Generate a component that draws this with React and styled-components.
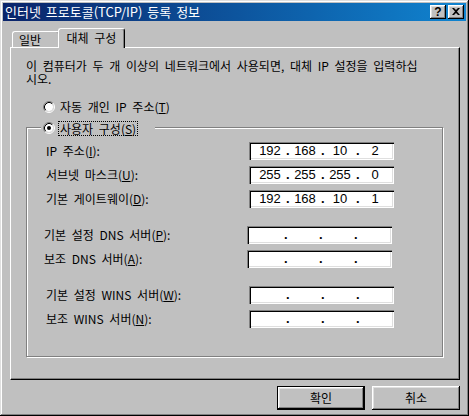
import React from "react";
import styled, { createGlobalStyle } from "styled-components";

const GlobalStyle = createGlobalStyle`
  html, body {
    margin: 0;
    padding: 0;
    background: #c0c0c0;
  }
  body {
    font-family: "Noto Sans CJK KR", "DejaVu Sans", sans-serif;
    font-size: 12px;
    color: #000;
    word-spacing: 3px;
  }
  * {
    box-sizing: border-box;
  }
`;

const ipRows = [
  { label: "IP 주소(", key: "I", rest: "):", value: ["192", "168", "10", "2"] },
  { label: "서브넷 마스크(", key: "U", rest: "):", value: ["255", "255", "255", "0"] },
  { label: "기본 게이트웨이(", key: "D", rest: "):", value: ["192", "168", "10", "1"] },
];

const dnsRows = [
  { label: "기본 설정 DNS 서버(", key: "P", rest: "):" },
  { label: "보조 DNS 서버(", key: "A", rest: "):" },
];

const winsRows = [
  { label: "기본 설정 WINS 서버(", key: "W", rest: "):" },
  { label: "보조 WINS 서버(", key: "N", rest: "):" },
];

function RadioIcon({ checked }) {
  return (
    <RadioSvg viewBox="0 0 12 12" width="12" height="12">
      <circle cx="6" cy="6" r="4" fill="#fff" />
      <path d="M2.11 9.89A5.5 5.5 0 0 1 9.89 2.11" stroke="#808080" fill="none" />
      <path d="M9.89 2.11A5.5 5.5 0 0 1 2.11 9.89" stroke="#fff" fill="none" />
      <path d="M2.82 9.18A4.5 4.5 0 0 1 9.18 2.82" stroke="#000" fill="none" />
      <path d="M9.18 2.82A4.5 4.5 0 0 1 2.82 9.18" stroke="#dfdfdf" fill="none" />
      {checked && <circle cx="6" cy="6" r="2" fill="#000" />}
    </RadioSvg>
  );
}

function IpAddress({ value }) {
  const parts = value || ["", "", "", ""];
  return (
    <IpField>
      {parts.map((p, i) => (
        <React.Fragment key={i}>
          <Seg>{p}</Seg>
          {i < 3 && <Dot>.</Dot>}
        </React.Fragment>
      ))}
    </IpField>
  );
}

function FieldList({ rows }) {
  return rows.map((r) => (
    <FieldRow key={r.key}>
      <Label>
        {r.label}
        <u>{r.key}</u>
        {r.rest}
      </Label>
      <IpAddress value={r.value} />
    </FieldRow>
  ));
}

function App() {
  return (
    <>
      <GlobalStyle />
      <Window>
        <TitleBar>
          <TitleText>인터넷 프로토콜(TCP/IP) 등록 정보</TitleText>
          <CaptionButtons>
            <CaptionButton>
              <HelpGlyph>?</HelpGlyph>
            </CaptionButton>
            <CaptionButton>
              <svg width="8" height="7" viewBox="0 0 8 7">
                <path d="M0 0h2l2 2 2-2h2L5 3.5 8 7H6L4 5 2 7H0l3-3.5z" fill="#000" />
              </svg>
            </CaptionButton>
          </CaptionButtons>
        </TitleBar>

        <Body>
          <TabRow>
            <Tab $width={48}>일반</Tab>
            <Tab $active $width={67}>
              대체 구성
            </Tab>
          </TabRow>

          <Panel>
            <Description>
              이 컴퓨터가 두 개 이상의 네트워크에서 사용되면, 대체 IP 설정을 입력하십
              <br />
              시오.
            </Description>

            <RadioRow>
              <RadioIcon />
              <span>
                자동 개인 IP 주소(<u>T</u>)
              </span>
            </RadioRow>

            <GroupBox>
              <Legend>
                <RadioIcon checked />
                <FocusLabel>
                  사용자 구성(<u>S</u>)
                </FocusLabel>
              </Legend>

              <Sections>
                <Section>
                  <FieldList rows={ipRows} />
                </Section>
                <Section $shift={-2}>
                  <FieldList rows={dnsRows} />
                </Section>
                <Section>
                  <FieldList rows={winsRows} />
                </Section>
              </Sections>
            </GroupBox>
          </Panel>

          <ButtonRow>
            <PushButton $default>확인</PushButton>
            <PushButton>취소</PushButton>
          </ButtonRow>
        </Body>
      </Window>
    </>
  );
}

export default App;

const Window = styled.div`
  width: 469px;
  height: 416px;
  padding: 3px;
  background: #c0c0c0;
  box-shadow: inset -1px -1px #000, inset 1px 1px #dfdfdf, inset -2px -2px #808080,
    inset 2px 2px #fff;
  display: flex;
  flex-direction: column;
`;

const TitleBar = styled.div`
  height: 18px;
  flex: 0 0 18px;
  display: flex;
  align-items: center;
  justify-content: space-between;
  padding: 0 2px 0 2px;
  background: linear-gradient(90deg, #0a246a, #1084d0);
  color: #fff;
`;

const TitleText = styled.div`
  font-size: 13px;
  line-height: 18px;
  word-spacing: 2px;
  white-space: nowrap;
`;

const CaptionButtons = styled.div`
  display: flex;
  gap: 2px;
`;

const CaptionButton = styled.div`
  width: 16px;
  height: 14px;
  background: #c0c0c0;
  box-shadow: inset -1px -1px #000, inset 1px 1px #fff, inset -2px -2px #808080,
    inset 2px 2px #dfdfdf;
  display: flex;
  align-items: center;
  justify-content: center;
  padding-bottom: 1px;
`;

const HelpGlyph = styled.span`
  font-family: "Liberation Sans", Arial, sans-serif;
  font-weight: bold;
  font-size: 12px;
  line-height: 12px;
  color: #000;
`;

const Body = styled.div`
  flex: 1;
  display: flex;
  flex-direction: column;
  padding: 7px 6px 0 7px;
`;

const TabRow = styled.div`
  height: 19px;
  display: flex;
  align-items: flex-end;
  padding-left: 2px;
`;

const Tab = styled.div`
  position: relative;
  z-index: ${(p) => (p.$active ? 2 : 1)};
  width: ${(p) => p.$width}px;
  height: ${(p) => (p.$active ? 20 : 16)}px;
  margin: ${(p) => (p.$active ? "0 -2px -1px -2px" : "0")};
  padding: ${(p) => (p.$active ? "1px 0 0 0" : "0 0 0 6px")};
  text-align: ${(p) => (p.$active ? "center" : "left")};
  line-height: 16px;
  background: #c0c0c0;
  border-top: 1px solid #fff;
  border-left: 1px solid #fff;
  border-right: 1px solid #000;
  border-radius: 3px 3px 0 0;
  box-shadow: inset -1px 0 #808080;
  white-space: nowrap;
`;

const Panel = styled.div`
  height: 333px;
  flex: 0 0 333px;
  border-top: 1px solid #fff;
  border-left: 1px solid #fff;
  border-right: 1px solid #000;
  border-bottom: 1px solid #000;
  box-shadow: inset -1px -1px #808080;
  padding: 11px 0 0 15px;
  display: flex;
  flex-direction: column;
`;

const Description = styled.p`
  margin: 0;
  line-height: 13px;
  white-space: nowrap;
`;

const RadioRow = styled.div`
  display: flex;
  align-items: center;
  gap: 5px;
  height: 13px;
  margin: 15px 0 0 17px;
  line-height: 13px;
`;

const RadioSvg = styled.svg`
  flex: 0 0 12px;
  display: block;
`;

const GroupBox = styled.div`
  position: relative;
  width: 417px;
  height: 230px;
  margin-top: 14px;
  border: 1px solid #808080;
  box-shadow: inset 1px 1px #fff, 1px 1px #fff;
  padding: 14px 0 0 19px;
`;

const Legend = styled.div`
  position: absolute;
  top: -8px;
  left: 14px;
  width: 114px;
  height: 16px;
  padding-left: 2px;
  display: flex;
  align-items: center;
  gap: 3px;
  background: #c0c0c0;
`;

const FocusLabel = styled.span`
  height: 15px;
  line-height: 13px;
  padding: 0 1px;
  border: 1px dotted #000;
  white-space: nowrap;
`;

const Sections = styled.div`
  display: flex;
  flex-direction: column;
  gap: 18px;
`;

const Section = styled.div`
  display: flex;
  flex-direction: column;
  gap: 6px;
  margin-left: ${(p) => p.$shift || 0}px;
`;

const FieldRow = styled.div`
  display: grid;
  grid-template-columns: 203px 145px;
  align-items: center;
  height: 18px;
`;

const Label = styled.span`
  line-height: 14px;
  white-space: nowrap;
`;

const IpField = styled.div`
  width: 145px;
  height: 18px;
  background: #fff;
  box-shadow: inset 1px 1px #808080, inset 2px 2px #000, inset -1px -1px #fff,
    inset -2px -2px #dfdfdf;
  display: flex;
  padding-left: 5px;
  font-family: "Liberation Sans Narrow", "Liberation Sans", Arial, sans-serif;
  font-size: 13px;
  line-height: 18px;
  color: #000;
`;

const Seg = styled.span`
  width: 32px;
  text-align: center;
`;

const Dot = styled.span`
  width: 3px;
  text-align: center;
  font-weight: bold;
`;

const ButtonRow = styled.div`
  display: flex;
  justify-content: flex-end;
  gap: 7px;
  margin-top: 6px;
`;

const PushButton = styled.div`
  width: 88px;
  height: 24px;
  display: flex;
  align-items: center;
  justify-content: center;
  background: #c0c0c0;
  box-shadow: ${(p) =>
    p.$default
      ? "inset 0 0 0 1px #000, inset -2px -2px #000, inset 2px 2px #fff, inset -3px -3px #808080, inset 3px 3px #dfdfdf"
      : "inset -1px -1px #000, inset 1px 1px #fff, inset -2px -2px #808080, inset 2px 2px #dfdfdf"};
  line-height: 14px;
`;
